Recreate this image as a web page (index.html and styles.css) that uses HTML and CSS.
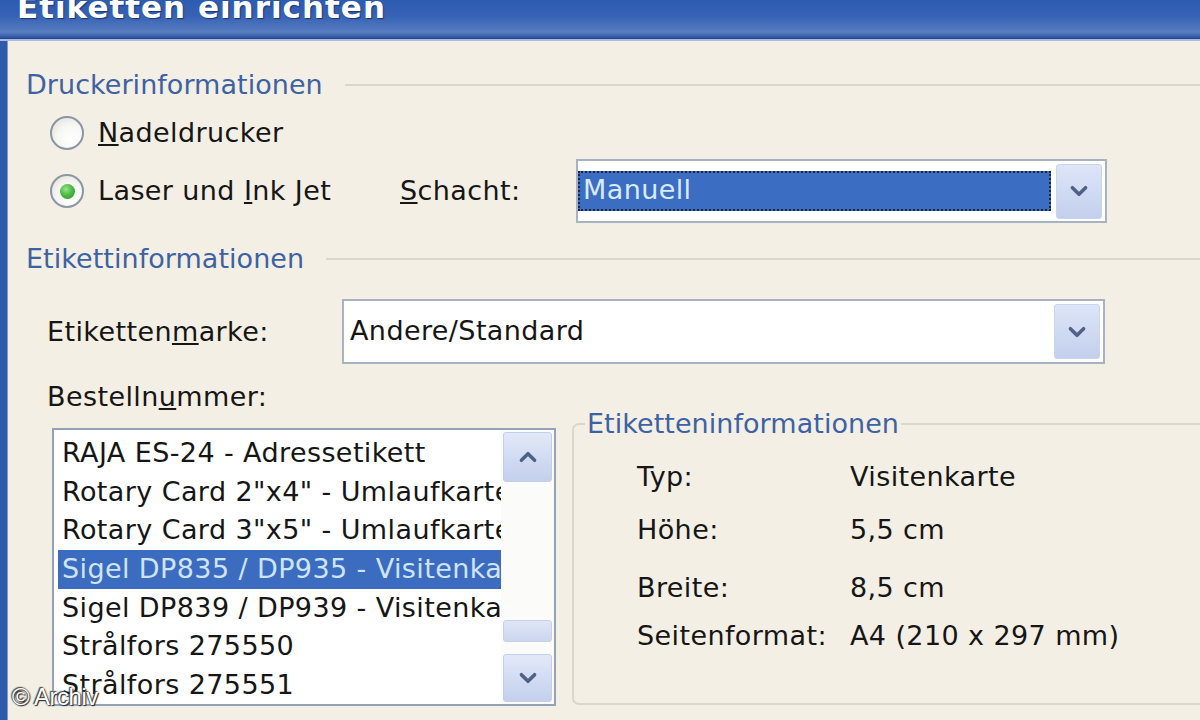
FILE: index.html
```html
<!DOCTYPE html>
<html lang="de">
<head>
<meta charset="utf-8">
<title>Etiketten einrichten</title>
<link rel="stylesheet" href="styles.css">
</head>
<body>
<div class="window">
  <div class="titlebar"><span class="title">Etiketten einrichten</span></div>
  <div class="frame">
    <div class="content">
      <div class="group-head head-1">
        <span class="group-label">Druckerinformationen</span>
        <span class="group-line"></span>
      </div>
      <div class="radio-row">
        <span class="radio"></span>
        <span class="text"><u>N</u>adeldrucker</span>
      </div>
      <div class="radio-row">
        <div class="radio-option">
          <span class="radio checked"><span class="dot"></span></span>
          <span class="text">Laser und <u>I</u>nk Jet</span>
        </div>
        <span class="text schacht-label"><u>S</u>chacht:</span>
        <div class="combo combo-schacht">
          <div class="combo-value selected">Manuell</div>
          <div class="combo-btn">
            <svg viewBox="0 0 20 20" width="22" height="22"><polyline points="4,7 10,13 16,7" fill="none" stroke="#4f6186" stroke-width="3.2" stroke-linecap="round" stroke-linejoin="round"/></svg>
          </div>
        </div>
      </div>
      <div class="group-head head-2">
        <span class="group-label">Etikettinformationen</span>
        <span class="group-line"></span>
      </div>
      <div class="field-row">
        <span class="text field-label">Etiketten<u>m</u>arke:</span>
        <div class="combo combo-marke">
          <div class="combo-value">Andere/Standard</div>
          <div class="combo-btn">
            <svg viewBox="0 0 20 20" width="22" height="22"><polyline points="4,7 10,13 16,7" fill="none" stroke="#4f6186" stroke-width="3.2" stroke-linecap="round" stroke-linejoin="round"/></svg>
          </div>
        </div>
      </div>
      <div class="text order-label">Bestelln<u>u</u>mmer:</div>
      <div class="bottom-row">
        <div class="listbox">
          <ul class="items">
            <li>RAJA ES-24 - Adressetikett</li>
            <li>Rotary Card 2"x4" - Umlaufkarte</li>
            <li>Rotary Card 3"x5" - Umlaufkarte</li>
            <li class="selected">Sigel DP835 / DP935 - Visitenkarte</li>
            <li>Sigel DP839 / DP939 - Visitenkarte</li>
            <li>Strålfors 275550</li>
            <li>Strålfors 275551</li>
          </ul>
          <div class="scrollbar">
            <div class="sb-btn">
              <svg viewBox="0 0 20 20" width="22" height="22"><polyline points="4,13 10,7 16,13" fill="none" stroke="#4f6186" stroke-width="3.2" stroke-linecap="round" stroke-linejoin="round"/></svg>
            </div>
            <div class="sb-track"></div>
            <div class="sb-thumb"></div>
            <div class="sb-gap"></div>
            <div class="sb-btn sb-down">
              <svg viewBox="0 0 20 20" width="22" height="22"><polyline points="4,7 10,13 16,7" fill="none" stroke="#4f6186" stroke-width="3.2" stroke-linecap="round" stroke-linejoin="round"/></svg>
            </div>
          </div>
        </div>
        <fieldset class="info-box">
          <legend class="group-label">Etiketteninformationen</legend>
          <div class="info-grid">
            <span class="text">Typ:</span><span class="text">Visitenkarte</span>
            <span class="text">Höhe:</span><span class="text">5,5 cm</span>
            <span class="text">Breite:</span><span class="text">8,5 cm</span>
            <span class="text">Seitenformat:</span><span class="text">A4 (210 x 297 mm)</span>
          </div>
        </fieldset>
      </div>
    </div>
  </div>
  <div class="watermark">© Archiv</div>
</div>
</body>
</html>
```

FILE: styles.css
```css
html, body {
  margin: 0;
  padding: 0;
}

body {
  width: 1200px;
  height: 720px;
  overflow: hidden;
  background: #f4efe5;
  font-family: "DejaVu Sans", "Liberation Sans", sans-serif;
  color: #161616;
}

.window {
  position: relative;
  width: 1200px;
  height: 720px;
  display: flex;
  flex-direction: column;
  overflow: hidden;
}

.titlebar {
  height: 39px;
  flex: none;
  overflow: hidden;
  padding-left: 17px;
  background: linear-gradient(to bottom, #2c5cb1 0%, #3661b4 40%, #4f76bd 72%, #5a7ec2 82%, #3e63ab 92%, #22438a 100%);
  border-bottom: 2px solid #a9bde2;
}

.title {
  display: block;
  margin-top: -8px;
  font-family: "DejaVu Sans", sans-serif;
  font-weight: bold;
  font-size: 31px;
  line-height: 31px;
  letter-spacing: 1px;
  color: #ffffff;
  text-shadow: 1px 1px 1px #1c3570;
  white-space: nowrap;
}

.frame {
  flex: 1;
  display: flex;
  border-left: 7px solid #2f5aa9;
  box-shadow: inset 1px 0 0 #7f9ad0;
}

.content {
  flex: 1;
  padding-left: 19px;
  display: flex;
  flex-direction: column;
}

.text {
  font-size: 27px;
  line-height: 32px;
  letter-spacing: 0.4px;
  white-space: nowrap;
}

.group-head {
  display: flex;
  align-items: center;
  height: 32px;
}

.head-1 {
  margin-top: 28px;
}

.head-2 {
  margin-top: 23px;
}

.group-label {
  font-size: 27px;
  line-height: 32px;
  color: #3d62a3;
  white-space: nowrap;
  letter-spacing: 0.05px;
}

.group-line {
  flex: 1;
  height: 2px;
  margin-left: 22px;
  background: #dcd6c8;
}

.radio-row {
  display: flex;
  align-items: center;
  height: 58px;
}

.head-1 + .radio-row {
  margin-top: 3px;
}

.radio {
  width: 30px;
  height: 30px;
  margin-left: 24px;
  margin-right: 14px;
  border: 2px solid #8a97a3;
  border-radius: 50%;
  background: radial-gradient(circle at 65% 70%, #ffffff 0%, #f6f6f3 50%, #dcdcd6 100%);
  display: flex;
  align-items: center;
  justify-content: center;
  flex: none;
}

.dot {
  width: 15px;
  height: 15px;
  border-radius: 50%;
  background: radial-gradient(circle at 40% 35%, #9be58f 0%, #4cbb44 45%, #2a8f2a 100%);
}

.radio-option {
  display: flex;
  align-items: center;
  width: 374px;
  flex: none;
}

.schacht-label {
  width: 176px;
  flex: none;
}

.combo {
  display: flex;
  align-items: center;
  box-sizing: border-box;
  border: 2px solid #a7b3c3;
  background: #ffffff;
  padding: 0 3px 0 0;
  flex: none;
}

.combo-schacht {
  width: 531px;
  height: 64px;
}

.combo-value {
  flex: 1;
  height: 40px;
  box-sizing: border-box;
  padding-left: 6px;
  font-size: 27px;
  line-height: 38px;
  letter-spacing: 0.4px;
  white-space: nowrap;
}

.combo-value.selected {
  background: #3b6ec3;
  color: #d9eaff;
  outline: 2px dotted #1b2742;
  outline-offset: -2px;
  padding-left: 5px;
  margin-right: 5px;
}

.combo-marke .combo-value {
  padding-left: 6px;
  margin-right: 5px;
}

.combo-btn {
  width: 46px;
  height: 55px;
  box-sizing: border-box;
  border-radius: 3px;
  background: linear-gradient(to bottom, #dde5f7 0%, #cdd8f1 60%, #c3cfec 100%);
  border: 1px solid #c9d4ee;
  display: flex;
  align-items: center;
  justify-content: center;
  flex: none;
}

.field-row {
  display: flex;
  align-items: center;
  margin-top: 24px;
  height: 65px;
}

.field-label {
  width: 295px;
  padding-left: 21px;
  flex: none;
}

.combo-marke {
  width: 763px;
  height: 65px;
}

.order-label {
  margin-top: 17px;
  padding-left: 21px;
}

.bottom-row {
  display: flex;
  align-items: flex-start;
  margin-top: -5px;
}

.listbox {
  margin-top: 20px;
  margin-left: 26px;
  width: 504px;
  height: 278px;
  box-sizing: border-box;
  border: 2px solid #93a2b6;
  background: #ffffff;
  display: flex;
  flex: none;
}

.items {
  list-style: none;
  margin: 0;
  padding: 4px 0 0 0;
  width: 447px;
  overflow: hidden;
  flex: none;
}

.items li {
  font-size: 27px;
  line-height: 38.7px;
  height: 38.7px;
  letter-spacing: 0.4px;
  white-space: nowrap;
  overflow: hidden;
  margin-left: 4px;
  padding-left: 4px;
}

.items li.selected {
  background: #3b6cbf;
  color: #cfe4fb;
}

.scrollbar {
  flex: 1;
  display: flex;
  flex-direction: column;
  padding: 2px 2px 0 2px;
  background: #fbfbf9;
}

.sb-btn {
  height: 50px;
  box-sizing: border-box;
  border-radius: 3px;
  background: linear-gradient(to bottom, #e2e9f8 0%, #cfd9f1 60%, #c4d0ec 100%);
  border: 1px solid #c3cfe9;
  display: flex;
  align-items: center;
  justify-content: center;
  flex: none;
}

.sb-track {
  height: 138px;
  flex: none;
}

.sb-thumb {
  height: 22px;
  border-radius: 3px;
  background: linear-gradient(to bottom, #dfe6f6, #ccd6ee);
  border: 1px solid #c6d0e8;
  box-sizing: border-box;
  flex: none;
}

.sb-gap {
  height: 12px;
  flex: none;
}

.sb-down {
  height: 48px;
}

.info-box {
  margin: 0 0 0 16px;
  padding: 0;
  width: 680px;
  height: 297px;
  box-sizing: border-box;
  border: 2px solid #dcd6c8;
  border-radius: 7px;
  flex: none;
  min-width: 0;
}

.info-box legend {
  margin-left: 11px;
  padding: 0 2px;
}

.info-grid {
  display: grid;
  grid-template-columns: 213px auto;
  grid-template-rows: 53px 58px 48px 40px;
  align-items: start;
  padding: 17px 0 0 63px;
}

.info-grid .text {
  line-height: 40px;
}

.watermark {
  position: absolute;
  left: 12px;
  top: 683px;
  font-family: "Liberation Sans", Arial, sans-serif;
  font-size: 24px;
  line-height: 28px;
  letter-spacing: -0.5px;
  color: #ffffff;
  text-shadow: 0 0 2px #333, 1px 1px 1px #222, -1px -1px 1px #444;
}
```
